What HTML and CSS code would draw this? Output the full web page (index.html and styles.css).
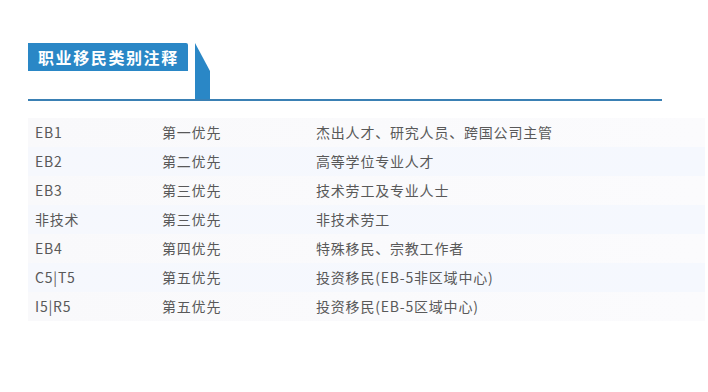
FILE: index.html
```html
<!DOCTYPE html>
<html lang="zh">
<head>
<meta charset="utf-8">
<link rel="stylesheet" href="styles.css">
</head>
<body>
<div class="page">
  <div class="header">
    <div class="title">职业移民类别注释</div>
    <div class="tab"></div>
  </div>
  <table class="list">
    <tr><td class="c1">EB1</td><td class="c2">第一优先</td><td>杰出人才、研究人员、跨国公司主管</td></tr>
    <tr><td class="c1">EB2</td><td class="c2">第二优先</td><td>高等学位专业人才</td></tr>
    <tr><td class="c1">EB3</td><td class="c2">第三优先</td><td>技术劳工及专业人士</td></tr>
    <tr><td class="c1">非技术</td><td class="c2">第三优先</td><td>非技术劳工</td></tr>
    <tr><td class="c1">EB4</td><td class="c2">第四优先</td><td>特殊移民、宗教工作者</td></tr>
    <tr><td class="c1">C5|T5</td><td class="c2">第五优先</td><td>投资移民(EB-5非区域中心)</td></tr>
    <tr><td class="c1">I5|R5</td><td class="c2">第五优先</td><td>投资移民(EB-5区域中心)</td></tr>
  </table>
</div>
</body>
</html>
```
FILE: styles.css
```css
html, body {
  margin: 0;
  padding: 0;
  background: #fff;
}
.page {
  padding: 43px 0 0 28px;
  font-family: "Noto Sans CJK SC", "Noto Sans", sans-serif;
}
.header {
  display: flex;
  align-items: flex-start;
  width: 634px;
  height: 56px;
  border-bottom: 2px solid #3a80b4;
}
.title {
  width: 160px;
  height: 28px;
  box-sizing: border-box;
  padding-left: 10px;
  background: #2a87c6;
  color: #fff;
  font-size: 16px;
  font-weight: 700;
  line-height: 28px;
  letter-spacing: 1.6px;
  border-radius: 0 2px 0 0;
}
.tab {
  margin-left: 7px;
  width: 15px;
  height: 56px;
  background: #2a87c6;
  clip-path: polygon(0 0, 100% 28px, 100% 100%, 0 100%);
}
.list {
  margin-top: 17px;
  width: 677px;
  border-collapse: collapse;
  color: #595959;
  font-size: 14px;
  letter-spacing: 0.8px;
}
.list td {
  height: 29px;
  padding: 0 0 0 7px;
  line-height: 29px;
  white-space: nowrap;
}
.list td.c1 { width: 120px; }
.list td.c2 { width: 147px; }
.list tr:nth-child(odd) {
  background: linear-gradient(90deg, #f9f9fb, #fbfbfd);
}
.list tr:nth-child(even) {
  background: linear-gradient(90deg, #f6f8fd, #f5f8fe);
}
```
